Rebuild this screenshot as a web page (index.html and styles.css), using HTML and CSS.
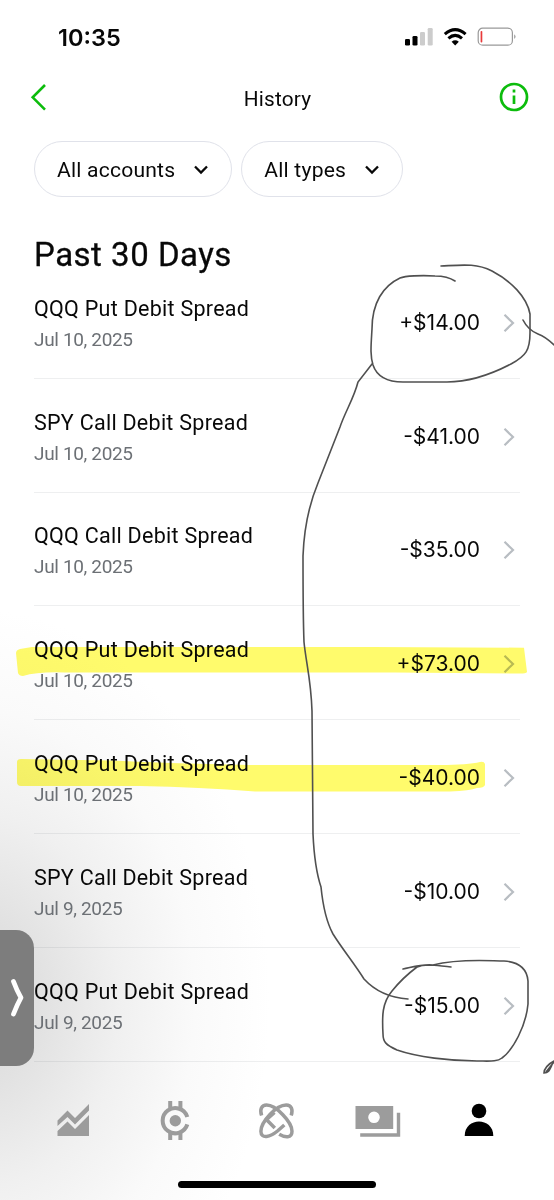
FILE: index.html
```html
<!DOCTYPE html>
<html lang="en">
<head>
    <meta charset="UTF-8">
    <title>History</title>
    <link rel="stylesheet" href="styles.css">
</head>
<body>
<div class="screen">
    <div class="status-bar">
        <span class="time">10:35</span>
        <svg class="status-icons" width="112" height="20" viewBox="0 0 112 20">
            <rect x="0" y="11" width="5" height="6.5" rx="1.3"/>
            <rect x="7.5" y="8" width="5" height="9.5" rx="1.3"/>
            <rect class="dim" x="15" y="4" width="5" height="13.5" rx="1.3"/>
            <rect class="dim" x="22.7" y="0" width="5" height="17.5" rx="1.3"/>
            <g class="wifi">
                <path d="M39.8 6.2Q50.2 -3 60.6 6.2"/>
                <path d="M43.4 10.4Q50.2 4.4 57 10.4"/>
            </g>
            <path d="M46.6 13.7Q50.2 10.8 53.8 13.7L50.2 17.4Z"/>
            <rect class="battery" x="73.2" y="0.2" width="34.2" height="17" rx="4.5"/>
            <rect class="charge" x="75.6" y="3" width="1.7" height="11.5" rx=".8"/>
            <path class="cap" d="M109.3 6.3Q111.7 8.7 109.3 11.1Z"/>
        </svg>
    </div>

    <div class="header">
        <svg class="back" width="18" height="28" viewBox="0 0 18 28"><path d="M15 2L2.7 14.3L15 26.6"/></svg>
        <h1>History</h1>
        <svg class="info" width="30" height="30" viewBox="0 0 30 30">
            <circle cx="15" cy="15" r="13"/>
            <path d="M15 13.5V22M15 7.6V10.4"/>
        </svg>
    </div>

    <div class="filters">
        <button class="filter">All accounts <svg width="16" height="10" viewBox="0 0 16 10"><path d="M2 1.5L8 7.5L14 1.5"/></svg></button>
        <button class="filter">All types <svg width="16" height="10" viewBox="0 0 16 10"><path d="M2 1.5L8 7.5L14 1.5"/></svg></button>
    </div>

    <h2>Past 30 Days</h2>
    <ul class="history">
        <li>
            <div class="trade"><span class="name">QQQ Put Debit Spread</span><span class="date">Jul 10, 2025</span></div>
            <span class="amount">+$14.00</span>
            <svg class="chevron" width="14" height="20" viewBox="0 0 14 20"><path d="M2.5 1.8L11 10L2.5 18.2"/></svg>
        </li>
        <li>
            <div class="trade"><span class="name">SPY Call Debit Spread</span><span class="date">Jul 10, 2025</span></div>
            <span class="amount">-$41.00</span>
            <svg class="chevron" width="14" height="20" viewBox="0 0 14 20"><path d="M2.5 1.8L11 10L2.5 18.2"/></svg>
        </li>
        <li>
            <div class="trade"><span class="name">QQQ Call Debit Spread</span><span class="date">Jul 10, 2025</span></div>
            <span class="amount">-$35.00</span>
            <svg class="chevron" width="14" height="20" viewBox="0 0 14 20"><path d="M2.5 1.8L11 10L2.5 18.2"/></svg>
        </li>
        <li>
            <div class="trade"><span class="name">QQQ Put Debit Spread</span><span class="date">Jul 10, 2025</span></div>
            <span class="amount">+$73.00</span>
            <svg class="chevron" width="14" height="20" viewBox="0 0 14 20"><path d="M2.5 1.8L11 10L2.5 18.2"/></svg>
        </li>
        <li>
            <div class="trade"><span class="name">QQQ Put Debit Spread</span><span class="date">Jul 10, 2025</span></div>
            <span class="amount">-$40.00</span>
            <svg class="chevron" width="14" height="20" viewBox="0 0 14 20"><path d="M2.5 1.8L11 10L2.5 18.2"/></svg>
        </li>
        <li>
            <div class="trade"><span class="name">SPY Call Debit Spread</span><span class="date">Jul 9, 2025</span></div>
            <span class="amount">-$10.00</span>
            <svg class="chevron" width="14" height="20" viewBox="0 0 14 20"><path d="M2.5 1.8L11 10L2.5 18.2"/></svg>
        </li>
        <li>
            <div class="trade"><span class="name">QQQ Put Debit Spread</span><span class="date">Jul 9, 2025</span></div>
            <span class="amount">-$15.00</span>
            <svg class="chevron" width="14" height="20" viewBox="0 0 14 20"><path d="M2.5 1.8L11 10L2.5 18.2"/></svg>
        </li>
    </ul>

    <div class="tabs">
        <!-- investing -->
        <svg width="50" height="44" viewBox="0 0 50 44">
            <path d="M9.5 20.5L19.5 10.5L27 18L41 4V10.5L27 24.5L19.5 17L9.5 26Z"/>
            <path d="M9.5 31L19.5 21.5L27 29L41 15V36H9.5Z"/>
        </svg>
        <!-- crypto -->
        <svg width="50" height="44" viewBox="0 0 50 44">
            <path class="line" d="M37.3 17A12.6 12.6 0 1 0 37.3 24.4"/>
            <circle cx="25.3" cy="20.7" r="5.7"/>
            <path class="line" d="M20.2 1V8M30.4 1V8M20.2 33V40M30.4 33V40"/>
        </svg>
        <!-- transfers -->
        <svg width="50" height="44" viewBox="0 0 50 44">
            <g class="line thin">
                <path d="M10.6 15.5C8.5 9.5 10.5 5.1 15.6 5.1C25 5.1 41 22 41 31.2C41 38.4 34 37.6 28.2 34.2"/>
                <path d="M40.2 15.5C42.3 9.5 40.3 5.1 35.2 5.1C25 5.1 9.9 22 9.9 31.2C9.9 39.5 19.5 36.8 26.5 31L33.3 25"/>
                <path d="M23.5 12.5L15.4 19.6L23.8 28.1"/>
            </g>
        </svg>
        <!-- cash -->
        <svg width="50" height="44" viewBox="0 0 50 44">
            <path fill-rule="evenodd" d="M2.5 6H40.2V29H2.5ZM21 11.5A5.8 5.8 0 1 0 21 23.1A5.8 5.8 0 1 0 21 11.5Z"/>
            <path d="M43.8 12.7H47.2V36.8H7.2V33.2H43.8Z"/>
        </svg>
        <!-- account -->
        <svg class="active" width="50" height="44" viewBox="0 0 50 44">
            <circle cx="25" cy="11" r="7.3"/>
            <path d="M10.7 36C10.7 16.8 39.3 16.8 39.3 36Z"/>
        </svg>
    </div>
    <div class="home-bar"></div>

    <div class="drawer">
        <svg width="16" height="42" viewBox="0 0 16 42"><path d="M3.5 4.5Q7 14 11 20.7Q7 28 3.5 37"/></svg>
    </div>

    <svg class="marker" width="554" height="1200" viewBox="0 0 554 1200">
        <path d="M16 653Q16 650 20 649L32 647H372L524 647.7L527 672Q526 673.5 520 673.5L395 672.5H65Q38 671.5 23 676Q19 676 18 673Z"/>
        <path d="M17 762Q17 759 21 759L110 760.5Q160 763 250 765H440Q468 765 480 762Q484 761 485 764V785Q484 788 477 788Q470 790.5 450 791.5H255Q200 787 140 786L21 786Q17 786 17 782Z"/>
    </svg>
    <svg class="pencil" width="554" height="1200" viewBox="0 0 554 1200">
        <path d="M455 281C449 277 443 276 435 276C421 275 405 276 400 278C383 286 372 303 372 329C371 346 370 355 373 365C377 377 389 382 403 382H447C468 382 488 376 511 364C526 356 530 350 530 333V314C527 297 511 281 492 271C476 263 462 265 441 266"/>
        <path d="M523 320Q528 330 538 334Q546 337 554 345"/>
        <path d="M372 364L358 382C354 398 345 412 340 427L318 483C308 507 304 529 303 556C303 590 303 616 304 642C306 663 311 679 312 711L313 834C314 856 316 872 321 887C323 907 327 923 333 934C343 950 354 963 364 979C376 992 393 998 408 999"/>
        <path d="M403 969C413 967 421 964 433 965C460 958 490 961 504 961C519 962 527 969 528 981V1004C526 1026 513 1050 502 1058C497 1062 489 1061 477 1061C450 1061 417 1057 397 1050C386 1045 383 1042 383 1034C382 1016 382 1003 392 991C400 981 409 973 417 967C427 963 438 966 451 967"/>
        <path d="M554 1061C548 1064 544 1069 544 1073C549 1073 550 1069 552 1065L546 1072L554 1062"/>
    </svg>
</div>
</body>
</html>
```
FILE: styles.css
```css
* {
    box-sizing: border-box;
}

body {
    margin: 0;
    background: #fff;
    color: #080808;
    font-family: Roboto, "Liberation Sans", sans-serif;
}

h1, h2, ul {
    margin: 0;
    padding: 0;
    font-weight: 400;
    list-style: none;
}

svg {
    display: block;
    flex: none;
}

.screen {
    position: relative;
    display: flex;
    flex-direction: column;
    height: 1200px;
    overflow: hidden;
    background: radial-gradient(ellipse 290px 390px at -20px 1000px, #d8d8d8 0%, #e2e2e2 22%, #f0f0f0 48%, #fafafa 74%, #fff 100%);
}

/* Status bar */
.status-bar {
    display: flex;
    justify-content: space-between;
    align-items: center;
    height: 74px;
    padding: 0 36px 0 58px;
}

.time {
    font: 600 23.5px Inter, sans-serif;
}

.status-icons {
    margin: 1px 1px 0 0;
    overflow: visible;
}

.status-icons .dim {
    fill: #ccc;
}

.wifi {
    fill: none;
    stroke: #000;
    stroke-width: 3;
}

.battery {
    fill: none;
    stroke: #999;
    stroke-width: 1.2;
}

.charge {
    fill: #e83a3a;
}

.cap {
    fill: #888;
}

/* Header */
.header {
    display: grid;
    grid-template-columns: 30px 1fr 30px;
    align-items: center;
    height: 46px;
    padding: 0 25px 0 29px;
}

.header h1 {
    padding: 4px 3px 0 0;
    font-size: 20.8px;
    letter-spacing: .2px;
    text-align: center;
}

.back, .info {
    fill: none;
    stroke: #0cbc0c;
    stroke-width: 2.6;
}

.back {
    margin: 0 0 1px 1px;
}

.info {
    stroke-width: 2.7;
}

/* Account and type filters */
.filters {
    display: flex;
    gap: 9px;
    margin: 21px 34px 0;
}

.filter {
    display: flex;
    align-items: center;
    gap: 18px;
    height: 56px;
    padding: 1px 22px 0;
    border: 1px solid #e0e2ea;
    border-radius: 28px;
    background: none;
    color: inherit;
    font: 21.1px Roboto, sans-serif;
    letter-spacing: .2px;
}

.filter svg {
    fill: none;
    stroke: #080808;
    stroke-width: 2.3;
}

h2 {
    height: 24px;
    margin: 46px 34px 0;
    font-size: 33px;
    line-height: 24px;
    letter-spacing: .5px;
    -webkit-text-stroke: .3px #080808;
}

/* Trades */
.history {
    margin: -2px 34px 0;
}

.history li {
    display: flex;
    align-items: center;
    height: 113.8px;
    padding-top: 2px;
    border-bottom: 1px solid rgba(90, 100, 110, .1);
}

.trade {
    display: flex;
    flex-direction: column;
    gap: 5px;
    flex: 1;
    padding-top: 4px;
}

.name {
    font-size: 21.5px;
    line-height: 26px;
    letter-spacing: .27px;
}

.date {
    color: #6c7075;
    font-size: 19px;
    line-height: 26px;
    letter-spacing: -.35px;
}

.amount {
    margin-right: 22px;
    font: 21px Inter, sans-serif;
}

.chevron {
    margin: 1px 4px 0 0;
    fill: none;
    stroke: #b8bdc2;
    stroke-width: 2.2;
}

/* Bottom navigation */
.tabs {
    display: flex;
    justify-content: space-between;
    margin: 38px 50px 0 48px;
    fill: #9c9c9c;
}

.tabs .active {
    fill: #000;
}

.tabs .line {
    fill: none;
    stroke: #9c9c9c;
    stroke-width: 4;
}

.tabs .thin {
    stroke-width: 3.5;
}

.home-bar {
    width: 198px;
    height: 7px;
    margin: 37px auto 0;
    border-radius: 4px;
    background: #000;
}

/* Overlays */
.drawer {
    position: absolute;
    top: 930px;
    left: 0;
    display: flex;
    align-items: center;
    justify-content: flex-end;
    width: 34px;
    height: 136px;
    padding-right: 8px;
    border-radius: 0 18px 18px 0;
    background: #7d7d7d;
}

.drawer svg {
    fill: none;
    stroke: #fff;
    stroke-width: 4.8;
    stroke-linecap: round;
    stroke-linejoin: round;
}

.marker, .pencil {
    position: absolute;
    top: 0;
    left: 0;
    pointer-events: none;
}

.marker {
    fill: #fffb6c;
    mix-blend-mode: multiply;
    filter: blur(.7px);
}

.pencil {
    fill: none;
    stroke: #505050;
    stroke-width: 1.6;
    stroke-linecap: round;
}
```
